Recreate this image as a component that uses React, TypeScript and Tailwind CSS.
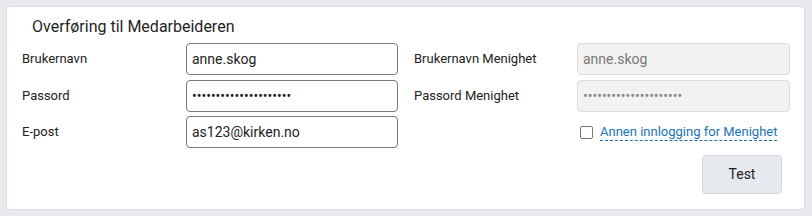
import React from 'react';

const inputBase =
    'h-[32px] w-full rounded-[4px] border px-[5px] text-[14px] outline-none';
const labelBase =
    'flex h-[32px] items-center text-[13px] text-[#222] whitespace-nowrap';

export default function App(): JSX.Element {
    const pw = 'xxxxxxxxxxxxxxxxxxxxx';

    return (
        <div
            className="w-[812px] h-[216px] bg-[#e7e9ed] p-[6px]"
            style={{ fontFamily: 'Roboto, "Liberation Sans", sans-serif' }}
        >
            <div className="h-[204px] w-[799px] rounded-[4px] border border-[#d8dbe0] bg-white pl-[15px] pr-[14px]">
                <div className="h-[36px] pl-[10px] pt-[10px] text-[16px] leading-[20px] text-[#1f1f1f]">
                    Overføring til Medarbeideren
                </div>
                <div className="grid grid-cols-[164px_212px_179px_213px] gap-y-[4.5px]">
                    <label className={labelBase}>Brukernavn</label>
                    <input
                        className={inputBase + ' border-[#767b82] bg-white text-[#222]'}
                        defaultValue="anne.skog"
                    />
                    <label className={labelBase + ' pl-[16px]'}>Brukernavn Menighet</label>
                    <input
                        className={inputBase + ' border-[#dcdcdc] bg-[#f2f2f2] text-[#777]'}
                        defaultValue="anne.skog"
                        disabled
                    />

                    <label className={labelBase}>Passord</label>
                    <input
                        type="password"
                        className={inputBase + ' border-[#767b82] bg-white text-[#222]'}
                        defaultValue={pw}
                    />
                    <label className={labelBase + ' pl-[16px]'}>Passord Menighet</label>
                    <input
                        type="password"
                        className={inputBase + ' border-[#dcdcdc] bg-[#f2f2f2] text-[#888]'}
                        defaultValue={pw}
                        disabled
                    />

                    <label className={labelBase}>E-post</label>
                    <input
                        className={inputBase + ' border-[#767b82] bg-white text-[#222]'}
                        defaultValue="as123@kirken.no"
                    />
                    <div />
                    <div className="flex h-[32px] items-center pl-[3px] whitespace-nowrap">
                        <span className="h-[13px] w-[13px] shrink-0 rounded-[2px] border border-[#767676] bg-white" />
                        <span className="ml-[7px] border-b border-dashed border-[#1a6fb0] text-[13px] leading-[16px] text-[#1a73b8]">
                            Annen innlogging for Menighet
                        </span>
                    </div>
                </div>
                <div className="mt-[7px] flex justify-end pr-[8px]">
                    <button className="h-[39px] w-[80px] rounded-[4px] border border-[#d3d6db] bg-[#e6e9ee] text-[14px] text-[#1f1f1f]">
                        Test
                    </button>
                </div>
            </div>
        </div>
    );
}
